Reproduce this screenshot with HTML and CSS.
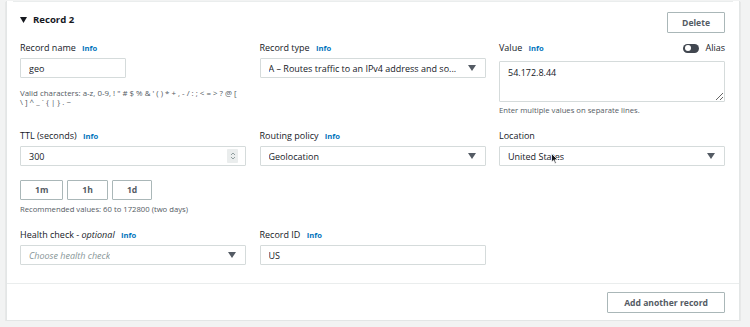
FILE: index.html
```html
<!DOCTYPE html>
<html lang="en">
<head>
    <meta charset="UTF-8">
    <meta name="viewport" content="width=device-width, initial-scale=1.0">
    <title>Record 2</title>
    <link rel="stylesheet" href="styles.css">
</head>
<body>
    <div class="panel">
        <div class="record">
            <div class="record-head">
                <div class="record-title">
                    <svg class="caret-down" width="7" height="6" viewBox="0 0 7 6"><path d="M0 0H7L3.5 6Z"/></svg>
                    Record 2
                </div>
                <button class="btn" type="button">Delete</button>
            </div>

            <div class="fields">
                <!-- row 1 -->
                <div class="field">
                    <div class="label">Record name <a class="info">Info</a></div>
                    <input class="input input-short" type="text" value="geo">
                    <div class="hint hint-gap">Valid characters: a-z, 0-9, ! " # $ % &amp; ' ( ) * + , - / : ; &lt; = &gt; ? @ [<br>\ ] ^ _ ` { | } . ~</div>
                </div>
                <div class="field">
                    <div class="label">Record type <a class="info">Info</a></div>
                    <div class="select">
                        <span class="select-text">A – Routes traffic to an IPv4 address and so...</span>
                        <svg class="select-caret" width="8" height="6" viewBox="0 0 8 6"><path d="M0 0H8L4 6Z"/></svg>
                    </div>
                </div>
                <div class="field">
                    <div class="label label-row">
                        <span>Value <a class="info">Info</a></span>
                        <span class="alias"><span class="toggle"></span>Alias</span>
                    </div>
                    <textarea class="textarea">54.172.8.44</textarea>
                    <div class="hint">Enter multiple values on separate lines.</div>
                </div>

                <!-- row 2 -->
                <div class="field">
                    <div class="label">TTL (seconds) <a class="info">Info</a></div>
                    <div class="input number">
                        <span>300</span>
                        <span class="spinner">
                            <svg width="6" height="10" viewBox="0 0 6 10"><path d="M1 4L3 2L5 4M1 6L3 8L5 6" fill="none" stroke="#879596" stroke-width="0.9"/></svg>
                        </span>
                    </div>
                    <div class="ttl-buttons">
                        <button class="btn btn-small" type="button">1m</button>
                        <button class="btn btn-small" type="button">1h</button>
                        <button class="btn btn-small" type="button">1d</button>
                    </div>
                    <div class="hint hint-ttl">Recommended values: 60 to 172800 (two days)</div>
                </div>
                <div class="field">
                    <div class="label">Routing policy <a class="info">Info</a></div>
                    <div class="select">
                        <span class="select-text">Geolocation</span>
                        <svg class="select-caret" width="8" height="6" viewBox="0 0 8 6"><path d="M0 0H8L4 6Z"/></svg>
                    </div>
                </div>
                <div class="field">
                    <div class="label">Location</div>
                    <div class="select">
                        <span class="select-text">United States</span>
                        <svg class="select-caret" width="8" height="6" viewBox="0 0 8 6"><path d="M0 0H8L4 6Z"/></svg>
                        <svg class="pointer" width="8" height="11" viewBox="0 0 8 11"><path d="M0.5 0.5V9L2.6 7.2L4 10.4L5.3 9.8L3.9 6.8H6.8Z" fill="#16191f" stroke="#fff" stroke-width="0.8"/></svg>
                    </div>
                </div>

                <!-- row 3 -->
                <div class="field">
                    <div class="label">Health check - <i>optional</i> <a class="info">Info</a></div>
                    <div class="select">
                        <span class="select-text placeholder">Choose health check</span>
                        <svg class="select-caret" width="8" height="6" viewBox="0 0 8 6"><path d="M0 0H8L4 6Z"/></svg>
                    </div>
                </div>
                <div class="field">
                    <div class="label">Record ID <a class="info">Info</a></div>
                    <input class="input" type="text" value="US">
                </div>
            </div>
        </div>

        <div class="panel-footer">
            <button class="btn btn-wide" type="button">Add another record</button>
        </div>
    </div>
</body>
</html>
```

FILE: styles.css
```css
body {
    margin: 0;
    background-color: #f2f3f3;
    font-family: "Open Sans", "Noto Sans", sans-serif;
    font-size: 9px;
    color: #16191f;
}
.panel {
    margin: 0 10px 0 6px;
    height: 320px;
    box-sizing: border-box;
    background-color: #fff;
    border: 1px solid #e3e6e6;
    border-top: 0;
    box-shadow: 0 1px 1px rgba(0, 0, 0, 0.25);
}
.record {
    margin: 1px 6px 0;
    padding: 10px 8px 0 7px;
    border-top: 1px solid #eaeded;
}
.record-head {
    display: flex;
    justify-content: space-between;
    align-items: center;
    height: 21px;
}
.record-title {
    display: flex;
    align-items: center;
    gap: 6px;
    font-weight: 700;
    font-size: 9.6px;
    margin-top: -6px;
}
.caret-down {
    fill: #16191f;
}
.btn {
    height: 21px;
    padding: 0 14px;
    background-color: #fff;
    border: 1px solid #aab7b8;
    border-radius: 1px;
    font-family: inherit;
    font-size: 8.6px;
    font-weight: 700;
    color: #545b64;
}
.btn-wide {
    padding: 0 16px;
}
.fields {
    display: grid;
    grid-template-columns: repeat(3, 226px);
    column-gap: 13.5px;
    row-gap: 15px;
    margin-top: 9px;
}
.label {
    height: 12px;
    line-height: 12px;
    margin-bottom: 4px;
    white-space: nowrap;
}
.label-row {
    display: flex;
    justify-content: space-between;
    align-items: center;
    margin-bottom: 7px;
}
.info {
    margin-left: 4px;
    font-size: 7.6px;
    font-weight: 700;
    color: #0073bb;
}
.alias {
    display: flex;
    align-items: center;
    gap: 6px;
}
.toggle {
    position: relative;
    width: 16px;
    height: 9px;
    border-radius: 5px;
    background-color: #414750;
}
.toggle::after {
    content: '';
    position: absolute;
    left: 1.5px;
    top: 1.5px;
    width: 6px;
    height: 6px;
    border-radius: 50%;
    background-color: #fff;
}
.input, .select, .textarea {
    display: flex;
    align-items: center;
    box-sizing: border-box;
    width: 100%;
    height: 20px;
    padding: 0 8px;
    border: 1px solid #d5dbdb;
    border-radius: 1px;
    background-color: #fff;
    font-family: inherit;
    font-size: 9px;
    color: #16191f;
}
.input-short {
    width: 106px;
}
.textarea {
    display: block;
    height: 41px;
    padding: 4px 8px;
    resize: vertical;
}
.select {
    position: relative;
    justify-content: space-between;
}
.select-text {
    overflow: hidden;
    white-space: nowrap;
    margin-right: 8px;
}
.placeholder {
    font-style: italic;
    color: #879596;
}
.select-caret {
    flex: none;
    fill: #545b64;
    margin-right: 1px;
}
.pointer {
    position: absolute;
    left: 51px;
    top: 6px;
}
.number {
    justify-content: space-between;
    padding-right: 7px;
}
.spinner {
    display: flex;
    align-items: center;
    justify-content: center;
    width: 11px;
    height: 14px;
    background-color: #eaeded;
    border-radius: 1px;
}
.ttl-buttons {
    display: flex;
    gap: 4px;
    margin-top: 14px;
}
.btn-small {
    height: 20px;
    padding: 0 14px;
}
.hint {
    margin-top: 4px;
    font-size: 7.7px;
    line-height: 9px;
    color: #545b64;
}
.hint-gap {
    margin-top: 11px;
    white-space: nowrap;
    font-size: 7.9px;
}
.hint-ttl {
    margin-top: 5px;
}
.panel-footer {
    display: flex;
    justify-content: flex-end;
    margin-top: 18px;
    padding: 8px 14px 0;
    border-top: 1px solid #eaeded;
}
```
